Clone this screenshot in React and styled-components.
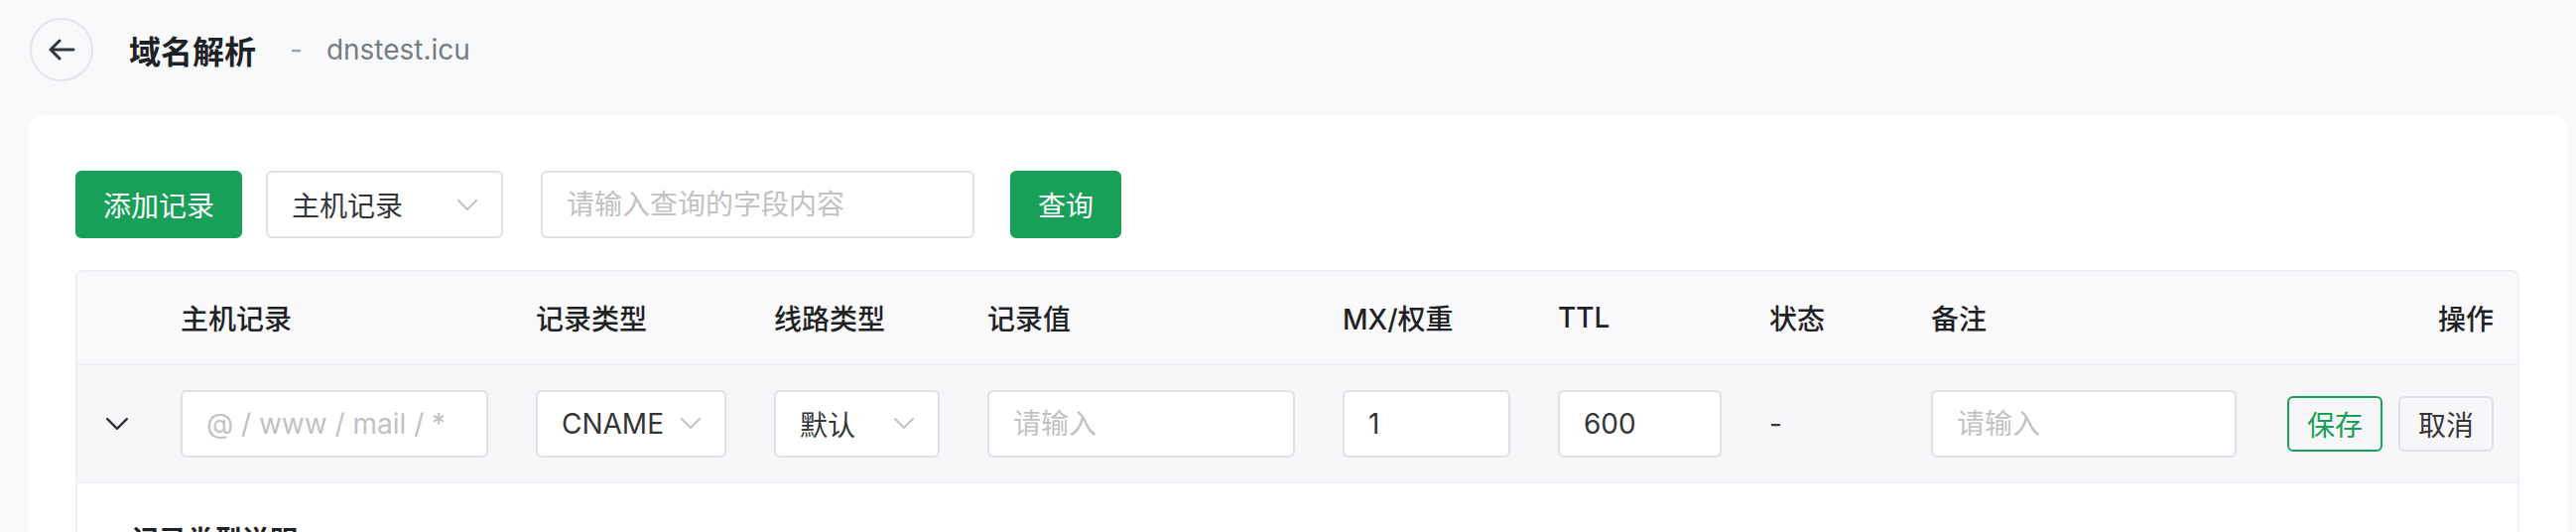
import React from "react";
import styled, { createGlobalStyle } from "styled-components";

const GlobalStyle = createGlobalStyle`
  * {
    box-sizing: border-box;
  }
  html,
  body {
    margin: 0;
    padding: 0;
    background: #f8f9fb;
    overflow: hidden;
  }
  body {
    font-family: Inter, "Noto Sans CJK SC", "Noto Sans", sans-serif;
    color: #333639;
  }
`;

const Page = styled.div`
  padding: 0 8px 0 28px;
`;

const Header = styled.header`
  display: flex;
  align-items: center;
  padding: 18px 0 34px 2px;
`;

const BackButton = styled.button`
  width: 64px;
  height: 64px;
  border-radius: 50%;
  border: 2px solid #e3e4e8;
  background: transparent;
  display: flex;
  align-items: center;
  justify-content: center;
  padding: 0;
  cursor: pointer;
`;

const Title = styled.h1`
  margin: 0 0 0 36px;
  font-size: 32px;
  font-weight: 700;
  color: #1f2225;
`;

const Sep = styled.span`
  margin: 0 24px 0 34px;
  font-size: 28px;
  color: #9a9fa6;
`;

const Domain = styled.span`
  font-size: 28px;
  color: #767c82;
`;

const Card = styled.main`
  background: #ffffff;
  border-radius: 16px 16px 0 0;
  padding: 56px 49px 0 48px;
  min-height: 600px;
`;

const Toolbar = styled.div`
  display: flex;
  align-items: center;
  gap: 24px;
  margin-bottom: 32px;
`;

const Button = styled.button`
  height: ${(p) => (p.$small ? "56px" : "68px")};
  padding: ${(p) => (p.$small ? "0 18px" : "0 26px")};
  border-radius: 6px;
  font-family: inherit;
  font-size: 28px;
  cursor: pointer;
  white-space: nowrap;
  border: 2px solid
    ${(p) =>
      p.$variant === "primary"
        ? "#18a058"
        : p.$variant === "ghost"
        ? "#18a058"
        : "#e0e0e6"};
  background: ${(p) => (p.$variant === "primary" ? "#18a058" : "transparent")};
  color: ${(p) =>
    p.$variant === "primary"
      ? "#ffffff"
      : p.$variant === "ghost"
      ? "#18a058"
      : "#333639"};
  margin-left: ${(p) => p.$offset || "0"};
`;

const SelectBox = styled.div`
  display: flex;
  align-items: center;
  justify-content: space-between;
  width: ${(p) => p.$width || "100%"};
  height: 68px;
  padding: 0 24px;
  border: 2px solid #e0e0e6;
  border-radius: 6px;
  background: #ffffff;
  font-size: 28px;
  color: #333639;
`;

const TextInput = styled.input`
  width: ${(p) => p.$width || "100%"};
  height: 68px;
  padding: 0 24px;
  border: 2px solid #e0e0e6;
  border-radius: 6px;
  background: #ffffff;
  font-family: inherit;
  font-size: 28px;
  color: #333639;
  outline: none;
  margin-left: ${(p) => p.$offset || "0"};

  &::placeholder {
    color: #c2c2c2;
  }
`;

const Table = styled.div`
  border: 2px solid #efeff5;
  border-radius: 8px;
  overflow: hidden;
`;

const columns =
  "80px 358px 240px 215px 358px 217px 213px 163px 356px 1fr";

const HeadRow = styled.div`
  display: grid;
  grid-template-columns: ${columns};
  height: 94px;
  background: #fafafc;
  border-bottom: 2px solid #efeff5;
`;

const BodyRow = styled.div`
  display: grid;
  grid-template-columns: ${columns};
  height: 119px;
  background: #f7f7fa;
  border-bottom: 2px solid #efeff5;
`;

const Cell = styled.div`
  display: flex;
  align-items: center;
  justify-content: ${(p) =>
    p.$align === "right" ? "flex-end" : p.$align === "center" ? "center" : "flex-start"};
  gap: 16px;
  padding: ${(p) => (p.$align === "center" ? "0" : "0 24px")};
  font-size: 28px;
  font-weight: ${(p) => (p.$head ? 500 : 400)};
  color: ${(p) => (p.$head ? "#1f2225" : "#333639")};
`;

const ExpandPanel = styled.div`
  background: #ffffff;
  padding: 36px 54px 40px;
  min-height: 200px;
`;

const PanelTitle = styled.h3`
  margin: 0;
  font-size: 28px;
  font-weight: 700;
  color: #1f2225;
`;

function Chevron({ color = "#c2c2c2", w = 20, h = 11, stroke = 2 }) {
  return (
    <svg width={w} height={h} viewBox="0 0 20 11" fill="none">
      <path
        d="M1 1l9 9 9-9"
        stroke={color}
        strokeWidth={stroke}
        strokeLinecap="round"
        strokeLinejoin="round"
      />
    </svg>
  );
}

function Select({ value, width }) {
  return (
    <SelectBox $width={width}>
      <span>{value}</span>
      <Chevron />
    </SelectBox>
  );
}

const heads = [
  "主机记录",
  "记录类型",
  "线路类型",
  "记录值",
  "MX/权重",
  "TTL",
  "状态",
  "备注",
];

export default function App() {
  return (
    <>
      <GlobalStyle />
      <Page>
        <Header>
          <BackButton aria-label="返回">
            <svg width="28" height="22" viewBox="0 0 28 22" fill="none">
              <path
                d="M26 11H3M12 2L3 11l9 9"
                stroke="#333639"
                strokeWidth="3"
                strokeLinecap="round"
                strokeLinejoin="round"
              />
            </svg>
          </BackButton>
          <Title>域名解析</Title>
          <Sep>-</Sep>
          <Domain>dnstest.icu</Domain>
        </Header>

        <Card>
          <Toolbar>
            <Button $variant="primary">添加记录</Button>
            <Select value="主机记录" width="239px" />
            <TextInput
              $width="437px"
              $offset="14px"
              placeholder="请输入查询的字段内容"
            />
            <Button $variant="primary" $offset="12px">
              查询
            </Button>
          </Toolbar>

          <Table>
            <HeadRow>
              <Cell />
              {heads.map((h) => (
                <Cell key={h} $head>
                  {h}
                </Cell>
              ))}
              <Cell $head $align="right">
                操作
              </Cell>
            </HeadRow>
            <BodyRow>
              <Cell $align="center">
                <Chevron color="#333639" w={22} h={12} stroke={2.2} />
              </Cell>
              <Cell>
                <TextInput placeholder="@ / www / mail / *" />
              </Cell>
              <Cell>
                <Select value="CNAME" />
              </Cell>
              <Cell>
                <Select value="默认" />
              </Cell>
              <Cell>
                <TextInput placeholder="请输入" />
              </Cell>
              <Cell>
                <TextInput defaultValue="1" />
              </Cell>
              <Cell>
                <TextInput defaultValue="600" />
              </Cell>
              <Cell>-</Cell>
              <Cell>
                <TextInput placeholder="请输入" />
              </Cell>
              <Cell $align="right">
                <Button $variant="ghost" $small>
                  保存
                </Button>
                <Button $small>取消</Button>
              </Cell>
            </BodyRow>
            <ExpandPanel>
              <PanelTitle>记录类型说明</PanelTitle>
            </ExpandPanel>
          </Table>
        </Card>
      </Page>
    </>
  );
}
